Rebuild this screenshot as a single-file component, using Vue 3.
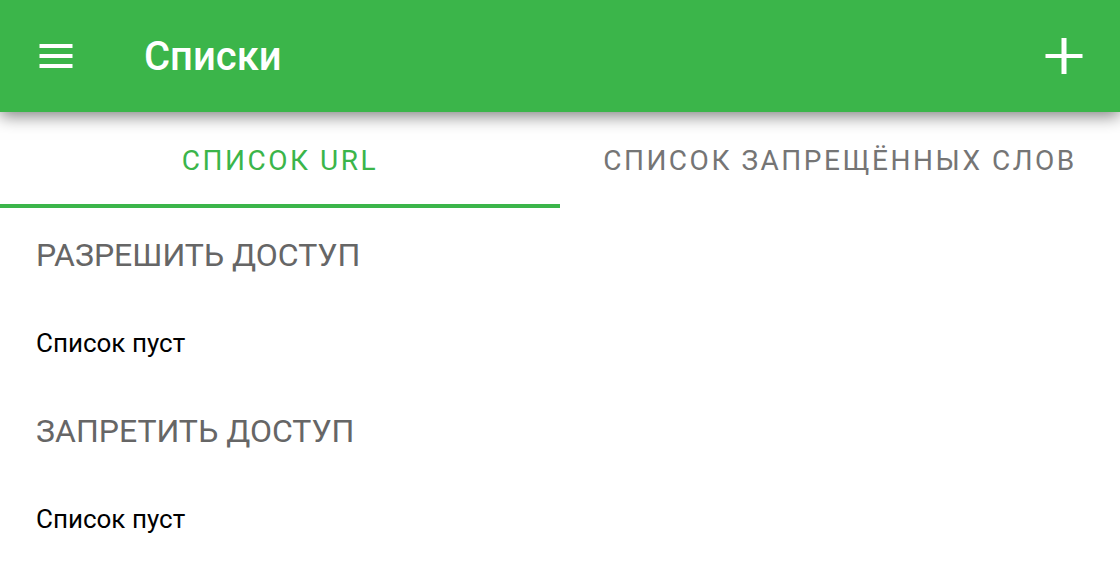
<script setup>
import { ref } from 'vue'

const tabs = ['СПИСОК URL', 'СПИСОК ЗАПРЕЩЁННЫХ СЛОВ']
const active = ref(0)
const sections = ['РАЗРЕШИТЬ ДОСТУП', 'ЗАПРЕТИТЬ ДОСТУП']
</script>

<template>
  <div class="screen">
    <header class="bar">
      <button class="icon" type="button" aria-label="Меню">
        <svg width="48" height="48" viewBox="0 0 48 48" fill="#fff">
          <path d="M7.5 12h33v4h-33zM7.5 22h33v4h-33zM7.5 32h33v4h-33z" />
        </svg>
      </button>
      <h1>Списки</h1>
      <button class="icon" type="button" aria-label="Добавить">
        <svg width="48" height="48" viewBox="0 0 48 48" fill="#fff">
          <path d="M21.5 6h5v16h16v4h-16v16h-5V26h-16v-4h16z" />
        </svg>
      </button>
    </header>
    <nav class="tabs" role="tablist">
      <button
        v-for="(tab, i) in tabs"
        :key="tab"
        type="button"
        role="tab"
        :aria-selected="active === i"
        :class="['tab', { active: active === i }]"
        @click="active = i"
      >{{ tab }}</button>
    </nav>
    <main>
      <section v-for="s in sections" :key="s">
        <h2>{{ s }}</h2>
        <p>Список пуст</p>
      </section>
    </main>
  </div>
</template>

<style>
body {
  background: #fff;
}
</style>

<style scoped>
.screen {
  font-family: Roboto, "Liberation Sans", sans-serif;
}
.bar {
  position: relative;
  display: flex;
  align-items: center;
  height: 112px;
  padding: 0 32px;
  box-sizing: border-box;
  background: #3bb54a;
  box-shadow: 0 4px 16px rgba(0, 0, 0, 0.5);
}
.icon {
  display: flex;
  padding: 0;
  border: 0;
  background: none;
  cursor: pointer;
}
h1 {
  flex: 1;
  margin: 0 0 0 64px;
  padding-top: 2px;
  color: #fff;
  font-size: 40px;
  font-weight: 500;
  line-height: 48px;
}
.tabs {
  display: grid;
  grid-template-columns: 1fr 1fr;
}
.tab {
  height: 96px;
  padding: 4px 0 0;
  border: 0;
  border-bottom: 4px solid transparent;
  background: none;
  color: #757575;
  font-family: inherit;
  font-size: 28px;
  font-weight: 400;
  letter-spacing: 0.09em;
  cursor: pointer;
}
.tab.active {
  border-color: #3bb54a;
  color: #3bb54a;
}
section {
  padding: 0 36px;
}
h2 {
  margin: 0;
  color: #666;
  font-size: 32px;
  font-weight: 400;
  line-height: 94px;
}
p {
  margin: 0;
  color: #000;
  font-size: 26px;
  line-height: 82px;
}
</style>
